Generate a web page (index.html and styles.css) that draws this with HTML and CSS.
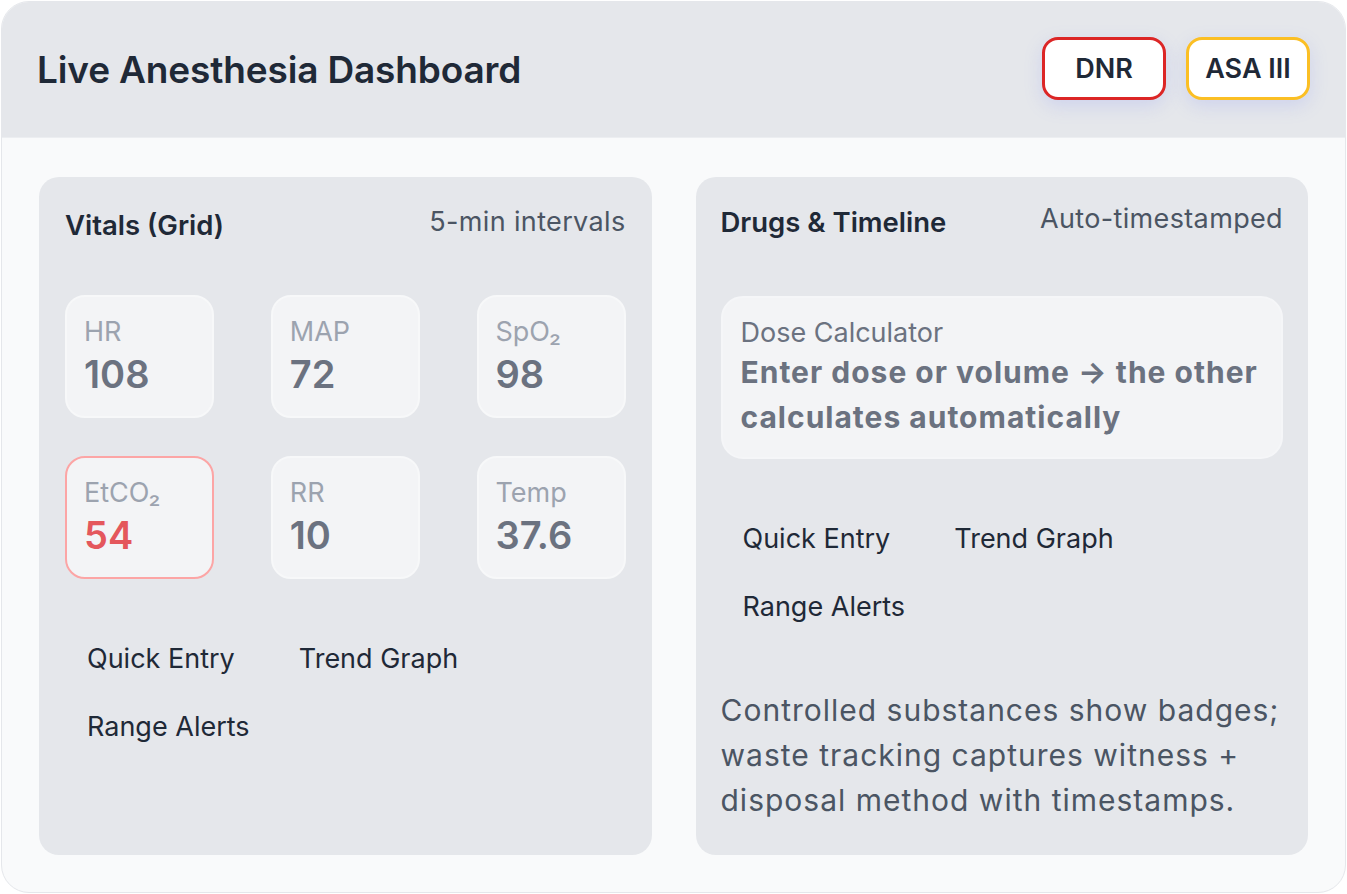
FILE: index.html
```html
<!DOCTYPE html>
<html lang="en">
<head>
<meta charset="utf-8">
<title>Live Anesthesia Dashboard</title>
<link rel="stylesheet" href="styles.css">
</head>
<body>
<div class="card">
  <header class="card-header">
    <h1 class="title">Live Anesthesia Dashboard</h1>
    <div class="badges">
      <span class="badge badge-dnr">DNR</span>
      <span class="badge badge-asa">ASA III</span>
    </div>
  </header>
  <main class="card-body">
    <section class="panel panel-vitals">
      <div class="panel-head">
        <h2 class="panel-title">Vitals (Grid)</h2>
        <span class="panel-meta">5-min intervals</span>
      </div>
      <div class="tiles">
        <div class="tile"><div class="tile-label">HR</div><div class="tile-value">108</div></div>
        <div class="tile"><div class="tile-label">MAP</div><div class="tile-value">72</div></div>
        <div class="tile"><div class="tile-label">SpO₂</div><div class="tile-value">98</div></div>
        <div class="tile tile-alert"><div class="tile-label">EtCO₂</div><div class="tile-value">54</div></div>
        <div class="tile"><div class="tile-label">RR</div><div class="tile-value">10</div></div>
        <div class="tile"><div class="tile-label">Temp</div><div class="tile-value">37.6</div></div>
      </div>
      <div class="chips">
        <span class="chip">Quick Entry</span>
        <span class="chip">Trend Graph</span>
        <span class="chip">Range Alerts</span>
      </div>
    </section>
    <section class="panel panel-drugs">
      <div class="panel-head">
        <h2 class="panel-title">Drugs &amp; Timeline</h2>
        <span class="panel-meta">Auto-timestamped</span>
      </div>
      <div class="calc">
        <div class="calc-label">Dose Calculator</div>
        <div class="calc-text">Enter dose or volume → the other calculates automatically</div>
      </div>
      <div class="chips">
        <span class="chip">Quick Entry</span>
        <span class="chip">Trend Graph</span>
        <span class="chip">Range Alerts</span>
      </div>
      <p class="note">Controlled substances show badges; waste tracking captures witness + disposal method with timestamps.</p>
    </section>
  </main>
</div>
</body>
</html>
```

FILE: styles.css
```css
* { box-sizing: border-box; }
html, body { margin: 0; padding: 0; background: #ffffff; }
body {
  font-family: Inter, "Noto Sans", "Liberation Sans", sans-serif;
  color: #1f2937;
}
.card {
  margin: 1px;
  width: 1345px;
  height: 892px;
  border: 1px solid #e5e7eb;
  border-radius: 28px;
  background: #f9fafb;
  overflow: hidden;
  display: flex;
  flex-direction: column;
}
.card-header {
  height: 136px;
  flex: none;
  background: #e5e7eb;
  border-bottom: 1px solid #eceef1;
  display: flex;
  align-items: center;
  justify-content: space-between;
  padding: 0 35px 0 35px;
}
.title {
  margin: 0;
  font-size: 37px;
  font-weight: 600;
  color: #1f2937;
  letter-spacing: -0.15px;
}
.badges { display: flex; gap: 20px; margin-top: -2px; }
.badge {
  width: 124px;
  height: 63px;
  display: flex;
  align-items: center;
  justify-content: center;
  background: #ffffff;
  border: 3px solid;
  border-radius: 16px;
  font-size: 27px;
  font-weight: 600;
  color: #1f2937;
  box-shadow: 0 6px 18px rgba(129, 140, 248, 0.22);
}
.badge-dnr { border-color: #dc2626; }
.badge-asa { border-color: #fbbf24; }

.card-body {
  flex: 1;
  display: grid;
  grid-template-columns: 1fr 1fr;
  gap: 44px;
  padding: 39px 37px 37px 37px;
}
.panel {
  background: #e5e7eb;
  border-radius: 20px;
  padding: 24px 26px 30px 26px;
  display: flex;
  flex-direction: column;
}
.panel-drugs { padding: 21px 25px 30px 25px; }
.panel-head {
  display: flex;
  justify-content: space-between;
  align-items: center;
  height: 40px;
}
.panel-title {
  margin: 0;
  font-size: 27.5px;
  font-weight: 600;
  color: #1f2937;
}
.panel-vitals .panel-title { margin-top: 8px; }
.panel-drugs .panel-title { margin-top: 7px; }
.panel-meta {
  font-size: 27px;
  color: #4b5563;
  letter-spacing: 0.35px;
}
.tiles {
  margin-top: 54px;
  display: grid;
  grid-template-columns: repeat(3, 149px);
  justify-content: space-between;
  row-gap: 38px;
}
.tile {
  height: 123px;
  background: #f3f4f6;
  border: 2px solid #f7f8f9;
  border-radius: 20px;
  padding: 16px 17px;
}
.tile-label {
  font-size: 27px;
  line-height: 38px;
  color: #9ca3af;
}
.tile-value {
  font-size: 38px;
  line-height: 46px;
  font-weight: 600;
  color: #6b7280;
}
.tile-alert { border-color: #fca5a5; }
.tile-alert .tile-value { color: #e4575c; }

.chips {
  margin-top: 50px;
  display: flex;
  flex-wrap: wrap;
  gap: 8px 20px;
}
.chip {
  padding: 10px 22px;
  font-size: 27px;
  line-height: 40px;
  color: #1f2937;
}
.calc {
  margin-top: 58px;
  background: #f3f4f6;
  border: 2px solid #f5f6f8;
  border-radius: 22px;
  padding: 18px 18px 17px 18px;
}
.calc-label {
  font-size: 27px;
  line-height: 34px;
  color: #6b7280;
}
.calc-text {
  font-size: 30px;
  line-height: 45px;
  font-weight: 700;
  letter-spacing: 1px;
  color: #6b7280;
}
.note {
  margin: 51px 0 0 0;
  font-size: 30px;
  line-height: 45px;
  letter-spacing: 1px;
  color: #4b5563;
}
```
